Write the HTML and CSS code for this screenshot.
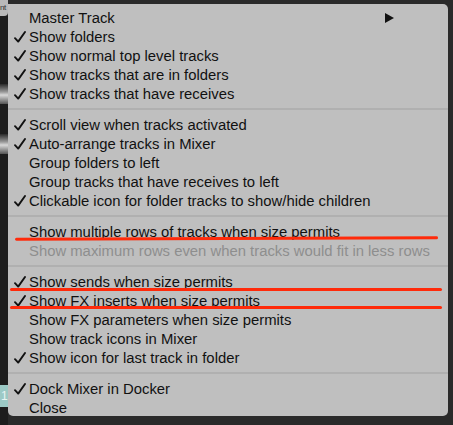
FILE: index.html
```html
<!DOCTYPE html>
<html>
<head>
<meta charset="utf-8">
<link rel="stylesheet" href="styles.css">
</head>
<body>
<div class="screen">
  <div class="strip">
    <div class="tab">nt</div>
    <div class="dark d1"></div>
    <div class="knob"></div>
    <div class="dark d2"></div>
    <div class="knob"></div>
    <div class="dark d3"></div>
    <div class="teal">1</div>
    <div class="dark d4"></div>
  </div>
  <div class="menu">
    <div class="row"><span class="chk"></span><span class="lbl">Master Track</span>
      <svg class="arrow" width="9" height="10" viewBox="0 0 9 10"><polygon points="0,0 9,5 0,10" fill="#111"/></svg></div>
    <div class="row"><span class="chk"><svg class="tick" viewBox="0 0 12 12"><path d="M1 7.2 L4.2 10.6 L11 1"/></svg></span><span class="lbl">Show folders</span></div>
    <div class="row"><span class="chk"><svg class="tick" viewBox="0 0 12 12"><path d="M1 7.2 L4.2 10.6 L11 1"/></svg></span><span class="lbl">Show normal top level tracks</span></div>
    <div class="row"><span class="chk"><svg class="tick" viewBox="0 0 12 12"><path d="M1 7.2 L4.2 10.6 L11 1"/></svg></span><span class="lbl">Show tracks that are in folders</span></div>
    <div class="row"><span class="chk"><svg class="tick" viewBox="0 0 12 12"><path d="M1 7.2 L4.2 10.6 L11 1"/></svg></span><span class="lbl">Show tracks that have receives</span></div>
    <div class="sep"></div>
    <div class="row"><span class="chk"><svg class="tick" viewBox="0 0 12 12"><path d="M1 7.2 L4.2 10.6 L11 1"/></svg></span><span class="lbl">Scroll view when tracks activated</span></div>
    <div class="row"><span class="chk"><svg class="tick" viewBox="0 0 12 12"><path d="M1 7.2 L4.2 10.6 L11 1"/></svg></span><span class="lbl">Auto-arrange tracks in Mixer</span></div>
    <div class="row"><span class="chk"></span><span class="lbl">Group folders to left</span></div>
    <div class="row"><span class="chk"></span><span class="lbl">Group tracks that have receives to left</span></div>
    <div class="row"><span class="chk"><svg class="tick" viewBox="0 0 12 12"><path d="M1 7.2 L4.2 10.6 L11 1"/></svg></span><span class="lbl">Clickable icon for folder tracks to show/hide children</span></div>
    <div class="sep"></div>
    <div class="row"><span class="chk"></span><span class="lbl">Show multiple rows of tracks when size permits</span></div>
    <div class="row disabled"><span class="chk"></span><span class="lbl">Show maximum rows even when tracks would fit in less rows</span></div>
    <div class="sep"></div>
    <div class="row"><span class="chk"><svg class="tick" viewBox="0 0 12 12"><path d="M1 7.2 L4.2 10.6 L11 1"/></svg></span><span class="lbl">Show sends when size permits</span></div>
    <div class="row"><span class="chk"><svg class="tick" viewBox="0 0 12 12"><path d="M1 7.2 L4.2 10.6 L11 1"/></svg></span><span class="lbl">Show FX inserts when size permits</span></div>
    <div class="row"><span class="chk"></span><span class="lbl">Show FX parameters when size permits</span></div>
    <div class="row"><span class="chk"></span><span class="lbl">Show track icons in Mixer</span></div>
    <div class="row"><span class="chk"><svg class="tick" viewBox="0 0 12 12"><path d="M1 7.2 L4.2 10.6 L11 1"/></svg></span><span class="lbl">Show icon for last track in folder</span></div>
    <div class="sep"></div>
    <div class="row"><span class="chk"><svg class="tick" viewBox="0 0 12 12"><path d="M1 7.2 L4.2 10.6 L11 1"/></svg></span><span class="lbl">Dock Mixer in Docker</span></div>
    <div class="row"><span class="chk"></span><span class="lbl">Close</span></div>
  </div>
  <div class="mark m1"></div>
  <div class="mark m2"></div>
  <div class="mark m3"></div>
</div>
</body>
</html>
```

FILE: styles.css
```css
html, body {
  margin: 0;
  padding: 0;
  background: #2a2a2a;
}
.screen {
  position: relative;
  width: 453px;
  height: 425px;
  display: flex;
  overflow: hidden;
}
.strip {
  width: 8px;
  display: flex;
  flex-direction: column;
  flex-shrink: 0;
}
.tab {
  height: 16px;
  background: #b9b9b9;
  color: #333;
  font: 8px "Liberation Sans", sans-serif;
  letter-spacing: -0.5px;
  line-height: 16px;
  overflow: hidden;
  border-bottom-right-radius: 4px;
}
.dark { background: #1d1d1d; }
.d1 { height: 68px; }
.d2 { height: 30px; }
.d3 { height: 231px; }
.d4 { flex: 1; }
.knob {
  height: 20px;
  background: linear-gradient(#2a2a2a, #9a9a9a 40%, #d8d8d8 55%, #555);
}
.teal {
  height: 22px;
  background: #9cc9c5;
  color: #e8f4f3;
  font: 12px "Liberation Sans", sans-serif;
  line-height: 22px;
  text-indent: 1px;
  overflow: hidden;
}
.menu {
  margin-top: 4px;
  width: 440px;
  height: 412px;
  padding-top: 4px;
  box-sizing: border-box;
  background: #bfbfbf;
  border-top-right-radius: 5px;
  border-bottom-right-radius: 5px;
  border-bottom-left-radius: 5px;
  font-family: "Liberation Sans", Arial, sans-serif;
  font-size: 14.85px;
  color: #111;
  flex-shrink: 0;
}
.row {
  height: 19px;
  display: flex;
  align-items: center;
  white-space: nowrap;
  position: relative;
}
.chk {
  width: 21px;
  height: 19px;
  flex-shrink: 0;
  display: flex;
  align-items: center;
  padding-left: 6px;
  box-sizing: border-box;
}
.tick {
  width: 12px;
  height: 12px;
  fill: none;
  stroke: #111;
  stroke-width: 1.9;
  stroke-linecap: round;
  stroke-linejoin: round;
}
.lbl { flex-shrink: 0; }
.disabled .lbl { color: #8e8e8e; }
.arrow {
  position: absolute;
  left: 377px;
  top: 5px;
}
.sep {
  height: 12px;
  display: flex;
  align-items: center;
}
.sep::before {
  content: "";
  display: block;
  width: 100%;
  height: 2px;
  background: #b0b0b0;
}
.mark {
  position: absolute;
  height: 3px;
  background: #ff2a0a;
  border-radius: 2px;
}
.m1 { left: 15px; width: 423px; top: 237px; transform: rotate(-0.2deg); }
.m2 { left: 10px; width: 432px; top: 288px; }
.m3 { left: 10px; width: 432px; top: 306px; }
```
